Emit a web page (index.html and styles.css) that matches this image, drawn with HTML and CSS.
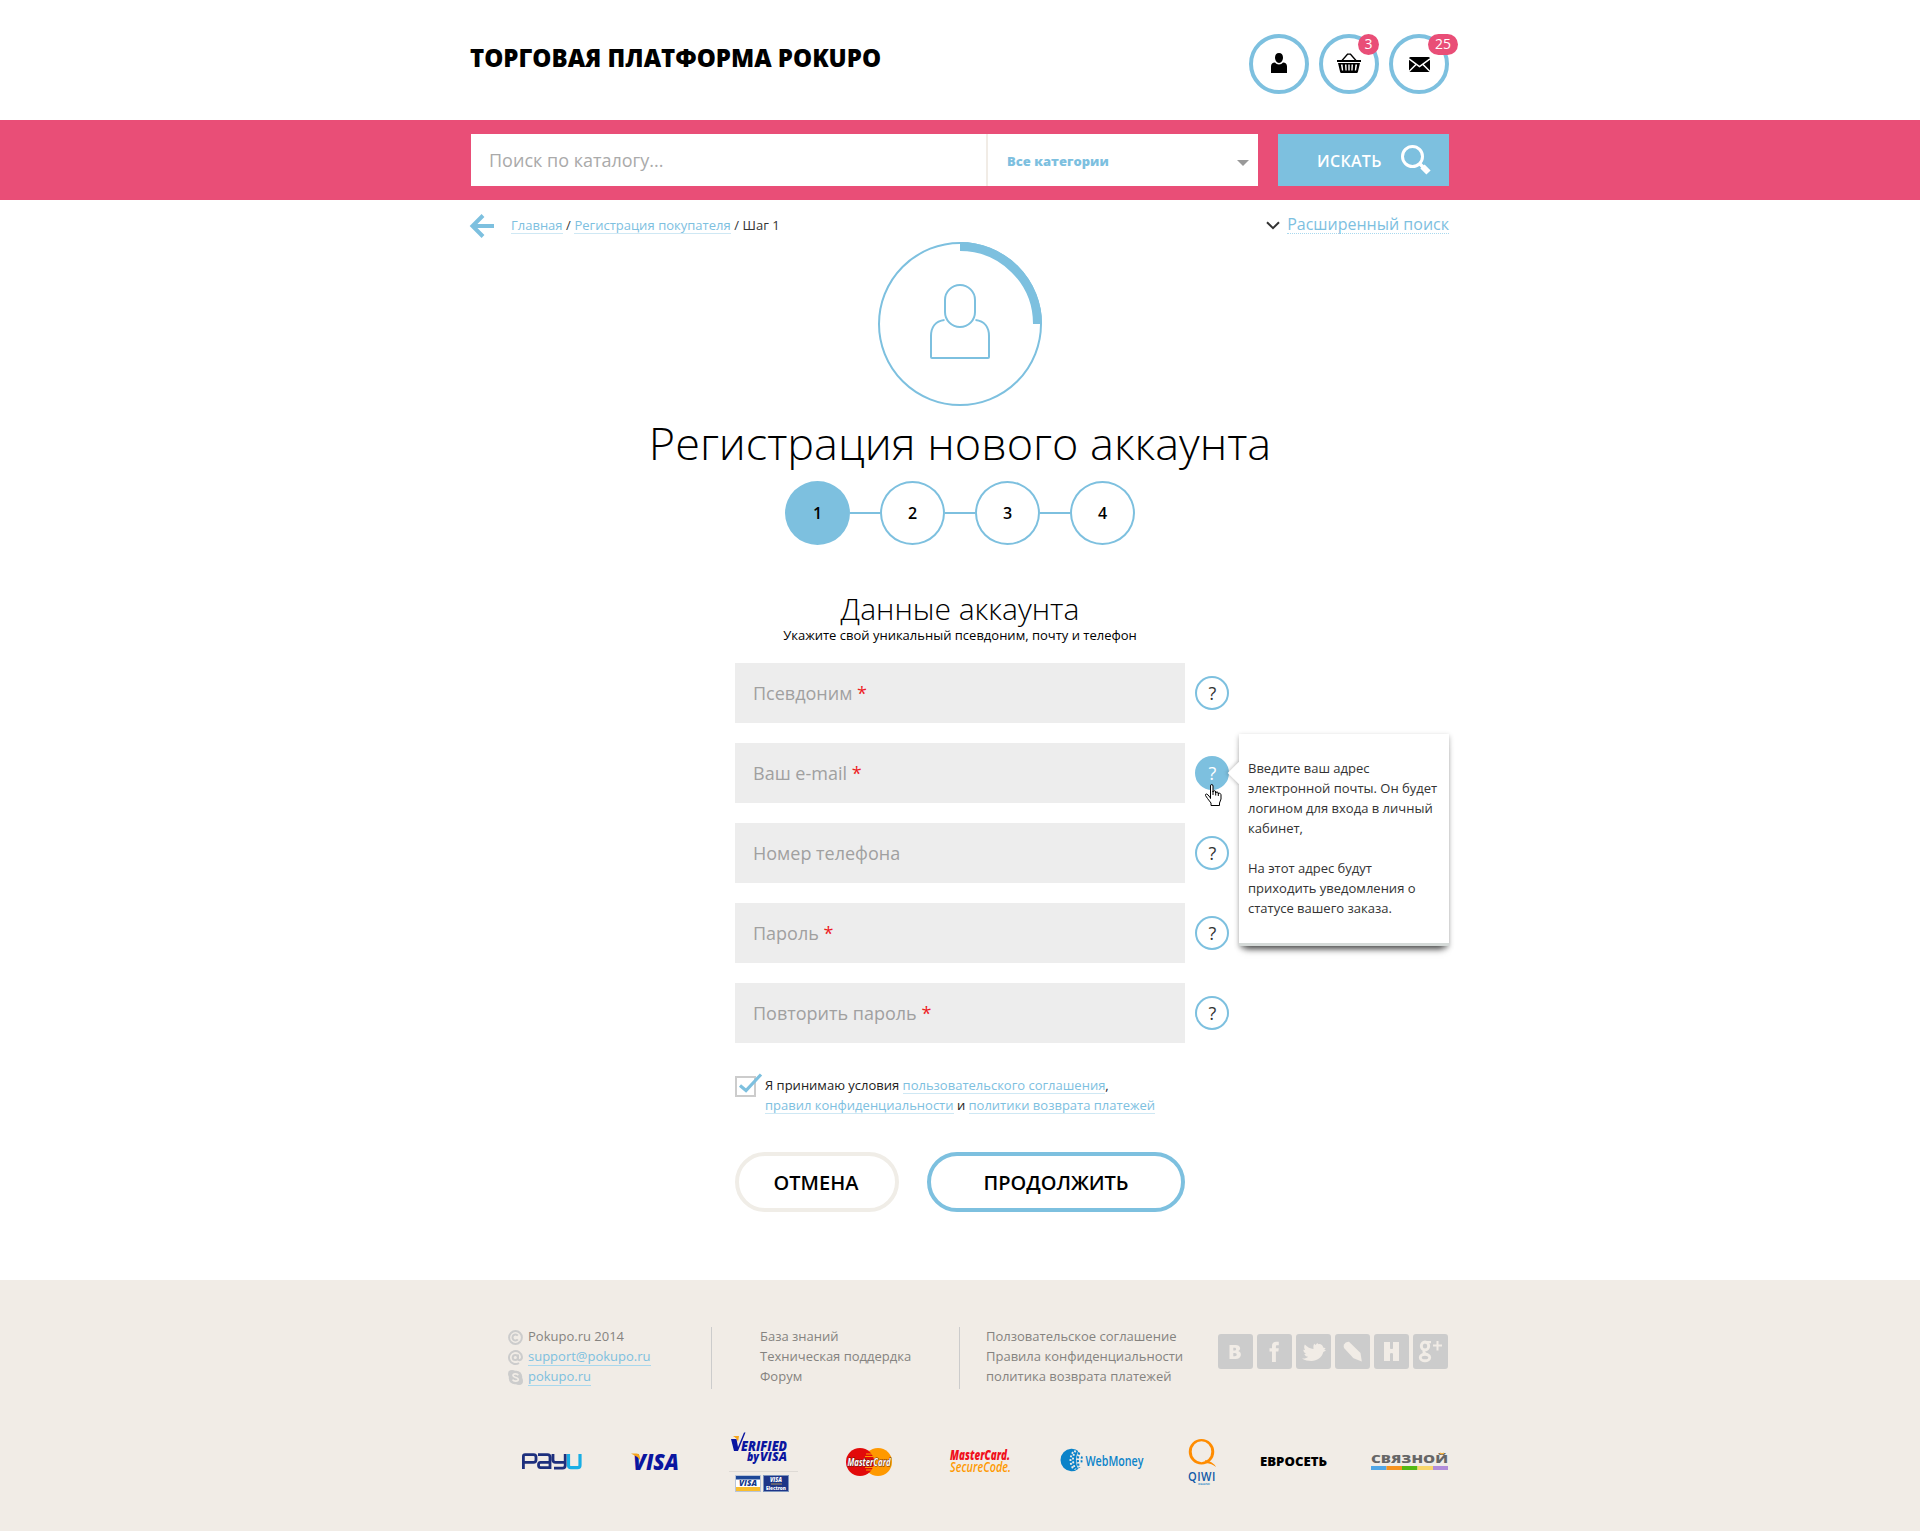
FILE: index.html
```html
<!DOCTYPE html>
<html lang="ru">
<head>
<meta charset="utf-8">
<title>Регистрация нового аккаунта</title>
<link rel="stylesheet" href="styles.css">
</head>
<body>
<header class="header wrap">
  <div class="brand">ТОРГОВАЯ ПЛАТФОРМА POKUPO</div>
  <nav class="user-nav">
    <a class="round" href="#">
      <svg width="16" height="20" viewBox="0 0 16 20"><path d="M8 0c2.600 0 4 1.900 4 4.600C12 7.600 10.300 10 8 10S4 7.600 4 4.600C4 1.900 5.400 0 8 0z"/><path d="M0 20v-6.500C0 11 1.500 9.800 4 9.600c1 1.300 2.300 2 4 2s3-.7 4-2c2.500.2 4 1.400 4 3.900V20z"/></svg>
    </a>
    <a class="round" href="#">
      <svg width="24" height="20" viewBox="0 0 24 20"><path d="M5 7.500L10.500 1.200h3L19 7.500" fill="none" stroke="#000" stroke-width="1.300"/><path d="M0 7h24v2H0z"/><path fill-rule="evenodd" d="M1 10h22l-2 8.500c-.2 1-.8 1.500-1.800 1.500H4.800c-1 0-1.600-.5-1.800-1.500zM3.900 11.500l1 6h1.300l-.6-6zM8 11.500l.4 6h1.300l-.2-6zM11.300 11.500v6h1.400v-6zM14.500 11.500l-.2 6h1.300l.4-6zM18.400 11.500l-.6 6h1.300l1-6z"/></svg>
      <span class="badge">3</span>
    </a>
    <a class="round" href="#">
      <svg class="mail" width="21" height="15" viewBox="0 0 21 15"><rect width="21" height="15" rx="1.500"/><path d="M0 1.800L10.500 9.500 21 1.800M0 14.500l7-7M21 14.500l-7-7" fill="none" stroke="#fff" stroke-width="1.500"/></svg>
      <span class="badge wide">25</span>
    </a>
  </nav>
</header>

<section class="searchbar">
  <form class="wrap search">
    <div class="query">Поиск по каталогу...</div>
    <div class="category"><span>Все категории</span><i class="caret"></i></div>
    <div class="submit"><span>ИСКАТЬ</span>
      <svg width="30" height="30" viewBox="0 0 30 30" fill="none" stroke="#fff"><circle cx="11.500" cy="11.500" r="10" stroke-width="3"/><path d="M18.500 18.500l4 4" stroke-width="3.500"/><path d="M21.500 21.500l6 6" stroke-width="6"/></svg>
    </div>
  </form>
</section>

<main class="wrap">
  <div class="subbar">
    <svg class="back" width="24" height="24" viewBox="0 0 24 24" fill="none" stroke="#7dc0df" stroke-width="4"><path d="M13 1.500L2.500 12 13 22.500M2.500 12H24"/></svg>
    <div class="crumbs"><a href="#">Главная</a> / <a href="#">Регистрация покупателя</a> / <span>Шаг 1</span></div>
    <div class="advanced">
      <svg width="14" height="9" viewBox="0 0 14 9" fill="none" stroke="#333" stroke-width="2"><path d="M1 1.200l6 6 6-6"/></svg>
      <a href="#">Расширенный поиск</a>
    </div>
  </div>

  <div class="registration">
    <svg class="progress" width="164" height="164" viewBox="0 0 164 164" fill="none" stroke="#7dc0df" stroke-width="2"><circle cx="82" cy="82" r="81"/><path d="M82 4.500A77.500 77.500 0 0 1 159.500 82" stroke-width="9"/><path d="M66.500 78C57 79 53 86 53 94v21q0 1 1 1h56q1 0 1-1V94c0-8-4-15-13.500-16"/><rect x="67" y="43" width="30" height="42" rx="15" fill="#fff"/></svg>
    <h1>Регистрация нового аккаунта</h1>
    <ol class="steps"><li class="current">1</li><li>2</li><li>3</li><li>4</li></ol>
    <h2>Данные аккаунта</h2>
    <p class="hint">Укажите свой уникальный псевдоним, почту и телефон</p>

    <div class="fields">
      <div class="row"><div class="field">Псевдоним <b>*</b></div><span class="help">?</span></div>
      <div class="row"><div class="field">Ваш e-mail <b>*</b></div><span class="help active">?</span>
        <div class="tooltip">
          <p>Введите ваш адрес<br>электронной почты. Он будет<br>логином для входа в личный<br>кабинет,</p>
          <p>На этот адрес будут<br>приходить уведомления о<br>статусе вашего заказа.</p>
        </div>
        <svg class="cursor" width="17" height="22" viewBox="0 0 17 22"><path d="M5.500 14.500V2Q5.500.5 6.700.5T8 2v6q0-1.300 1.300-1.300T10.700 8v1q0-1 1.300-1t1.300 1.300V10q0-.8 1.100-.8t1.600 1.500V15l-1.500 4v2.500H6V19l-3.500-4.500-2-3q-.3-1.500 1-1.500t4 4z" fill="#fff" stroke="#000"/><path d="M8 7v4M10.700 8v3.500M13.300 9v3" stroke="#000"/></svg>
      </div>
      <div class="row"><div class="field">Номер телефона</div><span class="help">?</span></div>
      <div class="row"><div class="field">Пароль <b>*</b></div><span class="help">?</span></div>
      <div class="row"><div class="field">Повторить пароль <b>*</b></div><span class="help">?</span></div>
    </div>

    <div class="terms">
      <svg width="27" height="24" viewBox="0 0 27 24" fill="none"><path d="M1 4h19v19H1z" stroke="#ccc" stroke-width="2"/><path d="M5 12.500l6 5L26 1.500" stroke="#7dc0df" stroke-width="3.200"/></svg>
      <p>Я принимаю условия <a href="#">пользовательского соглашения</a>,<br><a href="#">правил конфиденциальности</a> и <a href="#">политики возврата платежей</a></p>
    </div>

    <div class="actions"><button class="cancel" type="button">ОТМЕНА</button><button class="next" type="button">ПРОДОЛЖИТЬ</button></div>
  </div>
</main>

<footer>
  <div class="wrap">
    <div class="info">
      <ul class="contacts">
        <li><svg width="15" height="15" viewBox="0 0 15 15" fill="none" stroke="#ccc" stroke-width="2"><circle cx="7.500" cy="7.500" r="6.400"/><path d="M9.800 5.600a3 3 0 1 0 0 3.800"/></svg><span>Pokupo.ru 2014</span></li>
        <li><svg width="15" height="15" viewBox="0 0 15 15" fill="none" stroke="#ccc" stroke-width="2"><circle cx="7.300" cy="7.500" r="2.600"/><path d="M10 4.500v4.300c0 2.200 4 1.700 4-1.800A6.500 6.500 0 1 0 11 13"/></svg><a href="#">support@pokupo.ru</a></li>
        <li><svg width="15" height="15" viewBox="0 0 15 15"><rect x=".8" y=".8" width="13.400" height="13.400" rx="6" fill="#ccc"/><circle cx="4" cy="4" r="4" fill="#ccc"/><circle cx="11" cy="11" r="4" fill="#ccc"/><path d="M10.300 5.200C9 3.300 5 3.500 5 5.600c0 2.300 5.300 1.400 5.300 3.900 0 2.200-4.600 2.300-5.700.2" fill="none" stroke="#f1ece6" stroke-width="1.700"/></svg><a href="#">pokupo.ru</a></li>
      </ul>
      <ul class="links support"><li>База знаний</li><li>Техническая поддердка</li><li>Форум</li></ul>
      <ul class="links legal"><li>Ползовательское соглашение</li><li>Правила конфиденциальности</li><li>политика возврата платежей</li></ul>
      <div class="social">
        <a href="#"><svg viewBox="0 0 35 35"><path fill-rule="evenodd" d="M11.500 11h6.200c5.300 0 5.500 5 2.500 6 4.300 1 3.500 8-2.500 8h-6.200zM15.300 13.800v2.800h1.200c2.200 0 2.200-2.800 0-2.800zM15.300 19v3.200h1.500c2.600 0 2.600-3.200 0-3.200z"/></svg></a>
        <a href="#"><svg viewBox="0 0 35 35"><path d="M15 28V17.500h-2.500v-3.200H15V12c0-3 1.800-4.300 4.300-4.300h2.500v3.500h-1.600c-1 0-1.300.5-1.300 1.300v1.800h2.900l-.4 3.200h-2.500V28z"/></svg></a>
        <a href="#"><svg viewBox="0 0 35 35"><path d="M30 16.500L27.300 18C26 23.500 21 27 15.500 27c-3.500 0-6.500-.7-9.500-2.500 3 .2 5-.4 6.100-1.700-2-.3-3.200-1-3.800-2.700l2-.2c-1.800-.8-2.800-2.200-3-4.200l1.800.3C8 14.500 7.800 12.500 8.800 10.500c2.700 2.800 5.300 4.200 8.700 4.500 0-1.500-.5-3.500.7-5.300l1.200 1.200 2-2 .8 1.300c2.500-.7 4.500 1 5 3.200l2.500.8-1.500 1.300z"/></svg></a>
        <a href="#"><svg viewBox="0 0 35 35"><path d="M9 10.500Q10.500 7.500 14 7.800L25.500 19l1.300 8.500-8.300-3.200L9 14Q8.300 12 9 10.500z"/></svg></a>
        <a href="#"><svg viewBox="0 0 35 35"><path d="M10 8h6v6.500q1.500 1 3 0V8h6v19h-6v-7.500q-1.500-1-3 0V27h-6z"/></svg></a>
        <a href="#"><svg viewBox="0 0 35 35"><g fill="none" stroke="#f1ece6"><ellipse cx="12" cy="12" rx="3.700" ry="4" stroke-width="2.900"/><path d="M12 8.100h6M12 16q-2.500 1.600-.5 3t4 2.500" stroke-width="2.400"/><ellipse cx="12" cy="23.500" rx="4.700" ry="3.300" stroke-width="2.900"/><path d="M20 11.500h9M24.500 7v9.500" stroke-width="2"/></g></svg></a>
      </div>
    </div>

    <div class="payments">
      <svg class="payu" width="60" height="17" viewBox="0 0 60 17" fill="none" stroke="#1d2f7d" stroke-width="2.800"><path d="M1.400 16V3.300Q1.400 1.700 3 1.700h8.500Q14 1.700 14 4v3q0 2.300-2.500 2.300H1.500M16 1.700h9.500q2.500 0 2.500 2.300v10.700h-9.500q-2 0-2-2.700t2-2.700H28M31 1v6q0 2.300 2.500 2.300H43M43.200 1v11.500q0 2.700-2.700 2.700H32"/><path d="M46.500 1v11.200q0 2.500 2.500 2.500h6.500q2.500 0 2.500-2.500V1" stroke="#18aee5" stroke-width="3.200"/></svg>
      <svg class="visa" width="50" height="18" viewBox="0 0 50 18"><text x="2" y="16.500" textLength="46" lengthAdjust="spacingAndGlyphs" font-family="Open Sans" font-weight="800" font-style="italic" font-size="22" fill="#0a15a0">VISA</text><path d="M0 .5h5.500q2.500 0 3 2l1 5Q6 3 0 .5z" fill="#f7a51c"/></svg>
      <svg class="verified" width="70" height="64" viewBox="0 0 70 64"><g font-family="Open Sans" font-weight="800" font-style="italic" fill="#0a15a0"><text x="12" y="20.500" font-size="14" textLength="46" lengthAdjust="spacingAndGlyphs">ERIFIED</text><text x="18" y="31" font-size="12" textLength="12" lengthAdjust="spacingAndGlyphs">by</text><text x="31" y="31" font-size="13" textLength="27" lengthAdjust="spacingAndGlyphs">VISA</text></g><path d="M2 9h5.500l1.500 8L15 2.500h1.500L9 21H5z" fill="#0a15a0"/><path d="M4 6h6l-1 6Q8 8 4 6z" fill="#f7a51c"/><path d="M0 41.500h69" stroke="#dedad5"/><rect x="6.500" y="45.500" width="25" height="16" fill="#fff" stroke="#b9c4d8"/><path d="M7 46h24v3.500H7z" fill="#1d4796"/><path d="M7 57h24v4H7z" fill="#f9bd2d"/><text x="10" y="56" font-family="Open Sans" font-weight="800" font-style="italic" font-size="8" fill="#14388d" textLength="18" lengthAdjust="spacingAndGlyphs">VISA</text><rect x="34.500" y="45.500" width="25" height="16" fill="#1d3588" stroke="#7e95bd"/><g font-family="Open Sans" font-weight="800" fill="#fff"><text x="41" y="52" font-style="italic" font-size="6" textLength="12" lengthAdjust="spacingAndGlyphs">VISA</text><text x="37" y="60" font-size="5.500" textLength="20" lengthAdjust="spacingAndGlyphs">Electron</text></g><path d="M42 54h11" stroke="#a98c5c"/></svg>
      <svg class="mastercard" width="46" height="28" viewBox="0 0 46 28"><circle cx="32" cy="14" r="14" fill="#f90"/><circle cx="14" cy="14" r="14" fill="#e20a0a"/><path d="M20 6h6M19 8.500h8M19 19.500h8M20 22h6" stroke="#f90" stroke-width="1.200"/><text x="1.500" y="18" font-family="Open Sans" font-weight="700" font-style="italic" font-size="10.500" fill="#fff" stroke="#5c1a10" stroke-width="1" paint-order="stroke" textLength="43" lengthAdjust="spacingAndGlyphs">MasterCard</text></svg>
      <svg class="secure" width="62" height="26" viewBox="0 0 62 26" font-family="Open Sans" font-style="italic" font-size="13.500"><text x="0" y="11" font-weight="800" fill="#f0101c" textLength="60" lengthAdjust="spacingAndGlyphs">MasterCard.</text><text x="0" y="23" font-weight="600" fill="#f90" textLength="61" lengthAdjust="spacingAndGlyphs">SecureCode.</text></svg>
      <svg class="webmoney" width="83" height="24" viewBox="0 0 83 24"><path d="M18 3.500A11.200 11.200 0 1 0 18 20.500Q14 12 18 3.500z" fill="#0b83c9"/><g fill="none" stroke="#f1ece6" stroke-width="1.900" stroke-dasharray="1.900 1.900"><path d="M12 4q-5 8 0 16.500"/><path d="M14.500 2.500q-5 9 0 19"/></g><path d="M17.800 3q-4.500 9 0 18" fill="none" stroke="#f1ece6" stroke-width="1.200"/><g fill="none" stroke="#0b83c9" stroke-width="2.200" stroke-dasharray="2.200 1.600"><path d="M18.300 4.500q-3 7.500 0 15.500"/><path d="M21 8.500q-1 3.500 0 7.500" stroke-width="1.800"/></g><text x="24.500" y="17.500" font-family="Open Sans" font-weight="600" font-size="14.500" fill="#0b83c9" textLength="58" lengthAdjust="spacingAndGlyphs">WebMoney</text></svg>
      <svg class="qiwi" width="30" height="48" viewBox="0 0 30 48"><path fill-rule="evenodd" fill="#ff8c00" d="M13.500 0a12.700 12.700 0 1 1 0 25.500 12.700 12.700 0 0 1 0-25.500zM13.500 2.200a9.800 10.500 0 1 0 0 21 9.800 10.500 0 0 0 0-21z"/><path d="M17 21q8 1.500 11 7-4-3.500-10-4z" fill="#ff8c00"/><text x="0" y="41.500" font-family="Open Sans" font-weight="600" font-size="13" letter-spacing=".6" fill="#1159a7" textLength="28" lengthAdjust="spacingAndGlyphs">QIWI</text><text x="10" y="46" font-family="Open Sans" font-size="4" fill="#1180c4" textLength="12">кошелек</text></svg>
      <svg class="euroset" width="68" height="14" viewBox="0 0 68 14"><text x="0" y="11" font-family="Open Sans" font-weight="800" font-size="13" textLength="67" lengthAdjust="spacingAndGlyphs">ЕВРОСЕТЬ</text></svg>
      <svg class="svyaznoy" width="78" height="20" viewBox="0 0 78 20"><text x="0" y="11.500" font-family="Open Sans" font-weight="800" font-size="10.500" fill="#666" textLength="77" lengthAdjust="spacingAndGlyphs">СВЯЗНОЙ</text><path d="M69 2q2 1.500 4 0" fill="none" stroke="#f5b03a" stroke-width="1.500"/><path fill="#51a6e6" d="M0 15h15.500v4H0z"/><path fill="#f6921e" d="M15.500 15H31v4H15.500z"/><path fill="#54b813" d="M31 15h15.500v4H31z"/><path fill="#f8d66b" d="M46.500 15H62v4H46.500z"/><path fill="#b18cd9" d="M62 15h15v4H62z"/></svg>
    </div>
  </div>
</footer>
</body>
</html>
```
FILE: styles.css
```css
* { box-sizing: border-box; }
body { margin: 0; background: #fff; color: #333; font-family: "Open Sans", sans-serif; font-size: 13px; line-height: 20px; }
h1, h2, p, ul, ol { margin: 0; padding: 0; font-weight: 400; list-style: none; }
a { color: #7dc0df; text-decoration: none; }
svg { display: block; flex: none; overflow: visible; }
.wrap { width: 978px; margin: 0 auto; }

.header { display: flex; justify-content: space-between; height: 120px; padding-top: 34px; }
.brand { margin-left: -1px; color: #000; font-size: 24px; font-weight: 800; line-height: 47px; white-space: nowrap; }
.user-nav { display: flex; gap: 10px; }
.round { position: relative; display: flex; align-items: center; justify-content: center; width: 60px; height: 60px; padding-bottom: 2px; border: 4px solid #7dc0df; border-radius: 50%; }
.round .mail { margin: 2px 0 0 1px; }
.badge { position: absolute; top: -4px; right: -4px; width: 21px; height: 21px; border-radius: 11px; background: #e94e77; color: #fff; font-size: 14px; line-height: 20px; text-align: center; }
.badge.wide { right: -13px; width: 30px; }

.searchbar { height: 80px; padding: 14px 0; background: #e94e77; }
.search { display: flex; height: 52px; line-height: 52px; }
.query { width: 515px; padding-left: 18px; background: #fff; color: #aaa; font-size: 18px; }
.category { display: flex; align-items: center; justify-content: space-between; width: 272px; padding: 0 9px 0 19px; border-left: 2px solid #f1ece6; background: #fff; color: #7dc0df; font-weight: 800; line-height: 18px; }
.category span { padding-top: 2px; }
.caret { margin-top: 6px; border: 6px solid transparent; border-top-color: #999; border-bottom: 0; }
.submit { display: flex; align-items: center; justify-content: space-between; width: 171px; margin-left: 20px; padding: 0 18px 0 39px; background: #7dc0df; color: #fff; font-size: 16px; font-weight: 600; letter-spacing: .3px; line-height: 20px; }
.submit span { padding-top: 2px; }

.subbar { display: flex; height: 42px; padding-top: 14px; }
.back { margin-left: -1px; }
.crumbs { flex: 1; margin-left: 17px; padding-top: 1px; word-spacing: .2px; }
.crumbs a, .terms a { box-shadow: 0 -1px #cfe8f4 inset; }
.advanced { display: flex; gap: 7px; font-size: 16px; }
.advanced svg { margin-top: 7px; }
.advanced a { height: 20px; border-bottom: 1px dotted #a8d8ee; }

.registration { width: 450px; margin: 0 auto; }
.progress { margin: 0 auto; }
h1 { margin: 11px -100px 0; color: #000; font-size: 45px; font-weight: 300; line-height: 52px; text-align: center; white-space: nowrap; }
.steps { display: flex; justify-content: center; margin-top: 12px; }
.steps li { position: relative; width: 65px; height: 64px; border: 2px solid #7dc0df; border-radius: 50%; color: #000; font-size: 16px; font-weight: 600; line-height: 61px; text-align: center; }
.steps li + li { margin-left: 30px; }
.steps li + li::before { content: ""; position: absolute; left: -32px; top: 29px; width: 30px; height: 2px; background: #7dc0df; }
.steps .current { background: #7dc0df; }
h2 { margin-top: 44px; color: #000; font-size: 30px; font-weight: 300; line-height: 40px; text-align: center; }
.hint { margin-top: -4px; color: #000; text-align: center; }
.fields { display: grid; gap: 20px; margin-top: 18px; }
.row { position: relative; display: flex; align-items: center; gap: 10px; width: 494px; height: 60px; }
.field { width: 450px; height: 60px; padding-left: 18px; background: #ededed; color: #a0a0a0; font-size: 18px; line-height: 60px; }
.field b { color: #ed1c24; font-weight: 400; }
.help { width: 34px; height: 34px; padding-left: 1px; border: 2px solid #7dc0df; border-radius: 50%; font-size: 18px; line-height: 30px; text-align: center; }
.help.active { background: #7dc0df; color: #fff; }
.tooltip { position: absolute; z-index: 2; left: 504px; top: -9px; width: 210px; height: 212px; padding: 24px 9px; border-bottom: 3px solid #d5dad8; background: #fff; box-shadow: 0 2px 5px rgba(0,0,0,.3), 0 8px 7px -5px rgba(0,0,0,.6); white-space: nowrap; }
.tooltip::before { content: ""; position: absolute; left: -8px; top: 31px; width: 16px; height: 16px; transform: rotate(45deg); background: #fff; box-shadow: -1px 1px 4px rgba(0,0,0,.22); clip-path: polygon(-6px -6px, 16px 16px, 16px 22px, -6px 22px, -6px -6px); }
.tooltip p + p { margin-top: 20px; }
.cursor { position: absolute; z-index: 3; left: 470px; top: 41px; }
.terms { display: flex; gap: 3px; margin-top: 30px; white-space: nowrap; }
.terms p { padding-top: 2px; color: #222; }
.actions { display: flex; justify-content: space-between; margin-top: 37px; }
button { height: 60px; padding: 1px 0 0; border: 4px solid #7dc0df; border-radius: 30px; background: #fff; color: #000; font: 600 20px/51px "Open Sans", sans-serif; }
.cancel { width: 164px; padding-right: 2px; border-color: #f0ede7; }
.next { width: 258px; }

footer { height: 251px; margin-top: 68px; padding-top: 47px; background: #f1ece6; color: #858380; }
.info { display: flex; height: 62px; white-space: nowrap; }
.contacts { width: 241px; padding-left: 37px; border-right: 1px solid #ccc; }
.contacts li { display: flex; align-items: center; gap: 5px; height: 20px; padding-bottom: 1px; }
.contacts svg { margin-top: 1px; }
.contacts span { height: 18px; line-height: 17px; }
.contacts a { height: 18px; border-bottom: 1px solid #a8d8ee; line-height: 17px; }
.links li { height: 20px; line-height: 18px; }
.links.support { width: 248px; padding-left: 48px; border-right: 1px solid #ccc; }
.links.legal { width: 258px; padding-left: 26px; }
.social { display: flex; gap: 4px; padding-top: 7px; }
.social a { width: 35px; height: 35px; border-radius: 3px; background: #ccc; }
.social svg { width: 35px; height: 35px; fill: #f1ece6; }
.payments { display: flex; align-items: flex-start; padding: 42px 0 0 51px; }
.payu { margin-top: 22px; }
.visa { margin: 22px 0 0 49px; }
.verified { margin: -1px 0 0 48px; }
.mastercard { margin: 17px 0 0 47px; }
.secure { margin: 18px 0 0 58px; }
.webmoney { margin: 17px 0 0 49px; }
.qiwi { margin: 8px 0 0 44px; }
.euroset { margin: 24px 0 0 42px; }
.svyaznoy { margin: 20px 0 0 43px; }
```
